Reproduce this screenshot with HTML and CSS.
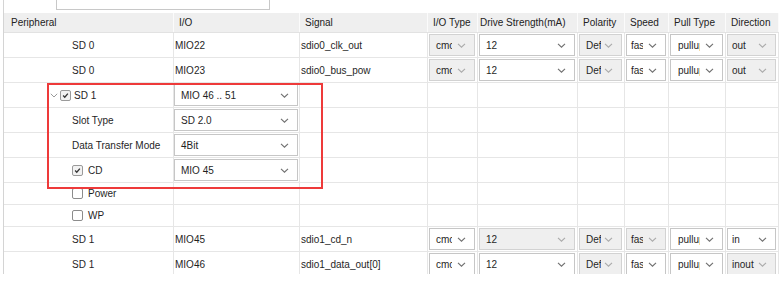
FILE: index.html
```html
<!DOCTYPE html>
<html>
<head>
<meta charset="utf-8">
<link rel="stylesheet" href="styles.css">
</head>
<body>
<div class="panel">
  <div class="search"></div>
  <div class="grid">
    <div class="row head">
      <div class="h h1">Peripheral</div>
      <div class="h">I/O</div>
      <div class="h">Signal</div>
      <div class="h">I/O Type</div>
      <div class="h h5">Drive Strength(mA)</div>
      <div class="h">Polarity</div>
      <div class="h">Speed</div>
      <div class="h">Pull Type</div>
      <div class="h">Direction</div>
    </div>

    <div class="row">
      <div class="c ind">SD 0</div>
      <div class="c txt">MIO22</div>
      <div class="c txt">sdio0_clk_out</div>
      <div class="c"><div class="combo dis"><span class="val">cmos</span><svg class="chev" viewBox="0 0 9 5"><polyline points="1,0.8 4.5,4.2 8,0.8"/></svg></div></div>
      <div class="c"><div class="combo"><span class="val">12</span><svg class="chev" viewBox="0 0 9 5"><polyline points="1,0.8 4.5,4.2 8,0.8"/></svg></div></div>
      <div class="c"><div class="combo dis tight"><span class="val">Default</span><svg class="chev" viewBox="0 0 9 5"><polyline points="1,0.8 4.5,4.2 8,0.8"/></svg></div></div>
      <div class="c"><div class="combo narrow"><span class="val">fast</span><svg class="chev" viewBox="0 0 9 5"><polyline points="1,0.8 4.5,4.2 8,0.8"/></svg></div></div>
      <div class="c"><div class="combo pull"><span class="val">pullup</span><svg class="chev" viewBox="0 0 9 5"><polyline points="1,0.8 4.5,4.2 8,0.8"/></svg></div></div>
      <div class="c"><div class="combo dis tight dir"><span class="val">out</span><svg class="chev" viewBox="0 0 9 5"><polyline points="1,0.8 4.5,4.2 8,0.8"/></svg></div></div>
    </div>

    <div class="row">
      <div class="c ind">SD 0</div>
      <div class="c txt">MIO23</div>
      <div class="c txt">sdio0_bus_pow</div>
      <div class="c"><div class="combo dis"><span class="val">cmos</span><svg class="chev" viewBox="0 0 9 5"><polyline points="1,0.8 4.5,4.2 8,0.8"/></svg></div></div>
      <div class="c"><div class="combo"><span class="val">12</span><svg class="chev" viewBox="0 0 9 5"><polyline points="1,0.8 4.5,4.2 8,0.8"/></svg></div></div>
      <div class="c"><div class="combo dis tight"><span class="val">Default</span><svg class="chev" viewBox="0 0 9 5"><polyline points="1,0.8 4.5,4.2 8,0.8"/></svg></div></div>
      <div class="c"><div class="combo narrow"><span class="val">fast</span><svg class="chev" viewBox="0 0 9 5"><polyline points="1,0.8 4.5,4.2 8,0.8"/></svg></div></div>
      <div class="c"><div class="combo pull"><span class="val">pullup</span><svg class="chev" viewBox="0 0 9 5"><polyline points="1,0.8 4.5,4.2 8,0.8"/></svg></div></div>
      <div class="c"><div class="combo dis tight dir"><span class="val">out</span><svg class="chev" viewBox="0 0 9 5"><polyline points="1,0.8 4.5,4.2 8,0.8"/></svg></div></div>
    </div>

    <div class="row">
      <div class="c tree">
        <svg class="twist" viewBox="0 0 8 5"><polyline points="0.8,0.8 4,4 7.2,0.8"/></svg>
        <span class="cb on"><svg viewBox="0 0 11 11"><polyline points="2.6,5.6 4.6,7.6 8.4,3.2"/></svg></span>
        <span class="lbl">SD 1</span>
      </div>
      <div class="c"><div class="combo wide"><span class="val">MIO 46 .. 51</span><svg class="chev" viewBox="0 0 9 5"><polyline points="1,0.8 4.5,4.2 8,0.8"/></svg></div></div>
      <div class="c"></div><div class="c"></div><div class="c"></div><div class="c"></div><div class="c"></div><div class="c"></div><div class="c"></div>
    </div>

    <div class="row">
      <div class="c ind">Slot Type</div>
      <div class="c"><div class="combo wide"><span class="val">SD 2.0</span><svg class="chev" viewBox="0 0 9 5"><polyline points="1,0.8 4.5,4.2 8,0.8"/></svg></div></div>
      <div class="c"></div><div class="c"></div><div class="c"></div><div class="c"></div><div class="c"></div><div class="c"></div><div class="c"></div>
    </div>

    <div class="row">
      <div class="c ind">Data Transfer Mode</div>
      <div class="c"><div class="combo wide"><span class="val">4Bit</span><svg class="chev" viewBox="0 0 9 5"><polyline points="1,0.8 4.5,4.2 8,0.8"/></svg></div></div>
      <div class="c"></div><div class="c"></div><div class="c"></div><div class="c"></div><div class="c"></div><div class="c"></div><div class="c"></div>
    </div>

    <div class="row">
      <div class="c ind opt">
        <span class="cb on"><svg viewBox="0 0 11 11"><polyline points="2.6,5.6 4.6,7.6 8.4,3.2"/></svg></span>
        <span class="lbl">CD</span>
      </div>
      <div class="c"><div class="combo wide"><span class="val">MIO 45</span><svg class="chev" viewBox="0 0 9 5"><polyline points="1,0.8 4.5,4.2 8,0.8"/></svg></div></div>
      <div class="c"></div><div class="c"></div><div class="c"></div><div class="c"></div><div class="c"></div><div class="c"></div><div class="c"></div>
    </div>

    <div class="row short">
      <div class="c ind opt">
        <span class="cb"></span>
        <span class="lbl">Power</span>
      </div>
      <div class="c"></div><div class="c"></div><div class="c"></div><div class="c"></div><div class="c"></div><div class="c"></div><div class="c"></div><div class="c"></div>
    </div>

    <div class="row short">
      <div class="c ind opt">
        <span class="cb"></span>
        <span class="lbl">WP</span>
      </div>
      <div class="c"></div><div class="c"></div><div class="c"></div><div class="c"></div><div class="c"></div><div class="c"></div><div class="c"></div><div class="c"></div>
    </div>

    <div class="row">
      <div class="c ind">SD 1</div>
      <div class="c txt">MIO45</div>
      <div class="c txt">sdio1_cd_n</div>
      <div class="c"><div class="combo"><span class="val">cmos</span><svg class="chev" viewBox="0 0 9 5"><polyline points="1,0.8 4.5,4.2 8,0.8"/></svg></div></div>
      <div class="c"><div class="combo dis"><span class="val">12</span><svg class="chev" viewBox="0 0 9 5"><polyline points="1,0.8 4.5,4.2 8,0.8"/></svg></div></div>
      <div class="c"><div class="combo dis tight"><span class="val">Default</span><svg class="chev" viewBox="0 0 9 5"><polyline points="1,0.8 4.5,4.2 8,0.8"/></svg></div></div>
      <div class="c"><div class="combo dis narrow"><span class="val">fast</span><svg class="chev" viewBox="0 0 9 5"><polyline points="1,0.8 4.5,4.2 8,0.8"/></svg></div></div>
      <div class="c"><div class="combo pull"><span class="val">pullup</span><svg class="chev" viewBox="0 0 9 5"><polyline points="1,0.8 4.5,4.2 8,0.8"/></svg></div></div>
      <div class="c"><div class="combo tight dir"><span class="val">in</span><svg class="chev" viewBox="0 0 9 5"><polyline points="1,0.8 4.5,4.2 8,0.8"/></svg></div></div>
    </div>

    <div class="row">
      <div class="c ind">SD 1</div>
      <div class="c txt">MIO46</div>
      <div class="c txt">sdio1_data_out[0]</div>
      <div class="c"><div class="combo"><span class="val">cmos</span><svg class="chev" viewBox="0 0 9 5"><polyline points="1,0.8 4.5,4.2 8,0.8"/></svg></div></div>
      <div class="c"><div class="combo"><span class="val">12</span><svg class="chev" viewBox="0 0 9 5"><polyline points="1,0.8 4.5,4.2 8,0.8"/></svg></div></div>
      <div class="c"><div class="combo dis tight"><span class="val">Default</span><svg class="chev" viewBox="0 0 9 5"><polyline points="1,0.8 4.5,4.2 8,0.8"/></svg></div></div>
      <div class="c"><div class="combo narrow"><span class="val">fast</span><svg class="chev" viewBox="0 0 9 5"><polyline points="1,0.8 4.5,4.2 8,0.8"/></svg></div></div>
      <div class="c"><div class="combo pull"><span class="val">pullup</span><svg class="chev" viewBox="0 0 9 5"><polyline points="1,0.8 4.5,4.2 8,0.8"/></svg></div></div>
      <div class="c"><div class="combo dis tight dir"><span class="val">inout</span><svg class="chev" viewBox="0 0 9 5"><polyline points="1,0.8 4.5,4.2 8,0.8"/></svg></div></div>
    </div>
  </div>
  <div class="highlight"></div>
</div>
</body>
</html>
```

FILE: styles.css
```css
* { box-sizing: border-box; }

html, body {
  margin: 0;
  padding: 0;
  background: #ffffff;
  overflow: hidden;
}

body {
  font-family: "Liberation Sans", Arial, sans-serif;
  font-size: 10px;
  color: #1f1f1f;
  width: 779px;
  height: 284px;
}

.panel {
  position: relative;
  margin-left: 3px;
  border-left: 1px solid #d4d4d4;
  height: 274px;
  overflow: hidden;
}

.search {
  margin-left: 52px;
  width: 214px;
  height: 10px;
  border: 1px solid #c8c8c8;
  border-top: none;
}

.grid {
  margin-top: 3px;
}

.row {
  display: grid;
  grid-template-columns: 170px 126px 128px 50px 100px 47px 44px 57px 53px;
  height: 25px;
  border-bottom: 1px solid #e6e6e6;
}

.row.short {
  height: 22px;
}

.row.head {
  height: 20px;
  background: #efefef;
  border-bottom: 1px solid #e2e2e2;
}

.h {
  display: flex;
  align-items: center;
  padding-left: 5px;
  border-right: 1px solid #fbfbfb;
  color: #222;
  white-space: nowrap;
  overflow: hidden;
}

.h1 { padding-left: 7px; }
.h5 { padding-left: 2px; }

.c {
  display: flex;
  align-items: center;
  border-right: 1px solid #e6e6e6;
  white-space: nowrap;
  overflow: hidden;
  min-width: 0;
}

.txt { padding-left: 1px; }

.ind { padding-left: 68px; }

.tree { padding-left: 46px; }

.twist {
  width: 8px;
  height: 5px;
  margin-right: 2px;
  fill: none;
  stroke: #9a9a9a;
  stroke-width: 1;
}

.cb {
  display: inline-block;
  width: 11px;
  height: 11px;
  border: 1px solid #8c8c8c;
  border-radius: 2px;
  background: #ffffff;
  margin-right: 3px;
  flex: none;
}

.cb.on {
  background: #f2f2f2;
  border-color: #9a9a9a;
}

.cb svg {
  display: block;
  width: 9px;
  height: 9px;
  fill: none;
  stroke: #333;
  stroke-width: 1.6;
}

.opt .cb { margin-right: 5px; }

.combo {
  flex: 1;
  min-width: 0;
  height: 22px;
  margin: 0 2px 0 1px;
  display: flex;
  align-items: center;
  background: #ffffff;
  border: 1px solid #c6c6c6;
}

.combo.wide { margin-left: 0; margin-right: 1px; }

.combo.dis {
  background: #efefef;
  border-color: #d2d2d2;
}

.val {
  flex: 1;
  min-width: 0;
  overflow: hidden;
  white-space: nowrap;
  padding-left: 6px;
  color: #1f1f1f;
}

.combo.narrow .val { padding-left: 4px; }
.combo.pull .val { padding-left: 7px; }
.combo.dir .val { padding-left: 4px; }

.chev {
  flex: none;
  width: 9px;
  height: 5px;
  margin: 0 8px 0 5px;
  fill: none;
  stroke: #707070;
  stroke-width: 1.1;
}

.combo.tight .chev { margin-left: 3px; }

.combo.dis .chev { stroke: #ababab; }

.highlight {
  position: absolute;
  left: 43px;
  top: 83px;
  width: 276px;
  height: 106px;
  border: 2px solid #ee3a3a;
  pointer-events: none;
}
```
